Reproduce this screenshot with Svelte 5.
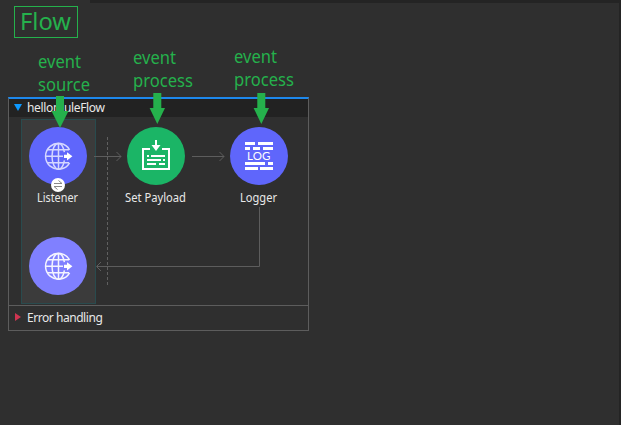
<script>
  const notes = [
    { lines: [['event', 38, 68, 43], ['source', 38, 91, 52]], x: 60, top: 96, neck: 111, tip: 128, half: 8.5 },
    { lines: [['event', 133, 64, 43], ['process', 133, 87, 60]], x: 157.3, top: 93, neck: 108, tip: 124, half: 7.7 },
    { lines: [['event', 234, 63, 43], ['process', 234, 86, 60]], x: 261.3, top: 93, neck: 108, tip: 124, half: 7.7 }
  ];
  const labels = [
    ['Listener', 37, 202, 41],
    ['Set Payload', 125, 202, 61],
    ['Logger', 240, 202, 37]
  ];
</script>

{#snippet globe(cx, cy, color)}
  <g transform="translate({cx} {cy})" fill="none" stroke={color} stroke-width="1.5">
    <path d="M11.6 -6.2A12.9 12.9 0 1 0 11.6 6.8" />
    <path d="M6.4 -3.8C5.4 -9 3 -12.6 .5 -12.6C-3.2 -12.6 -6 -6.9 -6 .3S-3.2 13.2 .5 13.2C3 13.2 5.4 9.6 6.4 4.4" />
    <path d="M.5 -12.5V13M-10.9 -6.2H11M-12.5 .3H5M-10.9 6.8H11" />
    <path d="M6 -1.3H9V-3.8L14.4 .3L9 4.4V2H6Z" fill="#fff" stroke="none" />
  </g>
{/snippet}

<main>
  <div class="topbar"></div>
  <section class="flow">
    <header>
      <svg class="caret" width="8" height="7"><path d="M0 0H8L4 7Z" fill="#0d99ff" /></svg>
      <span class="name">hellomuleFlow</span>
    </header>
    <svg class="body" width="299" height="188" viewBox="9 117 299 188">
      <rect x="21.5" y="119.5" width="74" height="184" fill="#3b3b3b" stroke="#294b4e" />
      <g fill="none" stroke="#5d5d5d">
        <path d="M94 156.5H121M116.5 152L121 156.5L116.5 161" />
        <path d="M192 156.5H224M219.5 152L224 156.5L219.5 161" />
        <path d="M259.5 207V266.5H97M101 262L96.5 266.5L101 271" />
        <path d="M107.5 137V287" stroke-dasharray="3 2" stroke="#606060" />
      </g>
      <circle cx="58" cy="156" r="29" fill="#5f66fb" />
      {@render globe(58, 156, '#d5d7ff')}
      <circle cx="58" cy="185" r="7" fill="#fff" />
      <path d="M54 183.5H62L58.5 180.5M62 186.5H54L57.5 189.5" fill="none" stroke="#888" />

      <circle cx="156" cy="156" r="29" fill="#1bb566" />
      <g fill="none" stroke="#fff" stroke-width="2">
        <path d="M150 149H143V169H169V149H162" />
        <path d="M147 156H149M151 156H165M147 160H161M163 160H165M147 164H156M159 164H165" stroke-width="1.8" />
        <path d="M156 140V146" />
      </g>
      <path d="M151.5 145H160.5L156 151Z" fill="#fff" />

      <circle cx="259" cy="156" r="29" fill="#5f66fb" />
      <path
        d="M245 143.5H255M258 143.5H273M245 148.5H250M253 148.5H260M263 148.5H273M245 163.5H265M268 163.5H273M245 168.5H258M260 168.5H273"
        stroke="#fff"
        stroke-width="3"
      />
      <text class="log" x="247" y="160.2" textLength="23.5" lengthAdjust="spacing">LOG</text>

      <circle cx="58" cy="266" r="29" fill="#8080ff" />
      {@render globe(58, 266, '#f3f3ff')}
      {#each labels as [text, x, y, w]}
        <text class="label" {x} {y} textLength={w} lengthAdjust="spacingAndGlyphs">{text}</text>
      {/each}
    </svg>
    <footer>
      <svg class="caret" width="6" height="8"><path d="M0 0L6 4L0 8Z" fill="#cf3551" /></svg>
      <span class="error">Error handling</span>
    </footer>
  </section>

  <svg class="notes" width="621" height="425">
    <rect x="14.5" y="6.5" width="63" height="31" fill="none" stroke="#25b14c" />
    <text class="title" x="20" y="30" textLength="51" lengthAdjust="spacingAndGlyphs">Flow</text>
    {#each notes as n}
      {#each n.lines as [text, x, y, w]}
        <text class="note" {x} {y} textLength={w} lengthAdjust="spacingAndGlyphs">{text}</text>
      {/each}
      <path
        d="M{n.x - 4} {n.top}H{n.x + 4}V{n.neck}H{n.x + n.half}L{n.x} {n.tip}L{n.x - n.half} {n.neck}H{n.x - 4}Z"
        fill="#25b14c"
      />
    {/each}
  </svg>
</main>

<style>
  :global(body) {
    margin: 0;
    background: #2f2f2f;
  }
  main {
    position: relative;
    box-sizing: border-box;
    width: 621px;
    height: 425px;
    overflow: hidden;
    background: #2f2f2f;
    border-right: 2px solid #242424;
    font-family: 'Noto Sans', 'Open Sans', sans-serif;
  }
  .topbar {
    height: 3px;
    margin-left: 90px;
    background: #242424;
  }
  .flow {
    display: flex;
    flex-direction: column;
    box-sizing: border-box;
    width: 301px;
    height: 234px;
    margin: 94px 0 0 8px;
    border: 1px solid #5d5d5d;
    border-top: 2px solid #1d88ec;
  }
  header {
    display: flex;
    align-items: center;
    height: 18px;
    padding-left: 5px;
    background: #222;
  }
  footer {
    display: flex;
    align-items: center;
    box-sizing: border-box;
    height: 25px;
    padding-left: 6px;
    border-top: 1px solid #5d5d5d;
  }
  span {
    color: #e8e8e8;
    font-size: 12px;
    line-height: 16px;
    white-space: nowrap;
  }
  .name {
    margin-left: 5px;
    letter-spacing: -0.33px;
  }
  .error {
    margin-left: 6px;
    letter-spacing: -0.45px;
  }
  svg {
    display: block;
    flex: none;
  }
  .caret {
    margin-bottom: 2px;
  }
  .label {
    font-size: 12px;
    fill: #e8e8e8;
  }
  .log {
    font-family: Lato, sans-serif;
    font-size: 11.5px;
    fill: #fff;
  }
  .notes {
    position: absolute;
    inset: 0;
  }
  .title {
    font-size: 24px;
    fill: #25b14c;
  }
  .note {
    font-size: 17.5px;
    fill: #25b14c;
  }
</style>
